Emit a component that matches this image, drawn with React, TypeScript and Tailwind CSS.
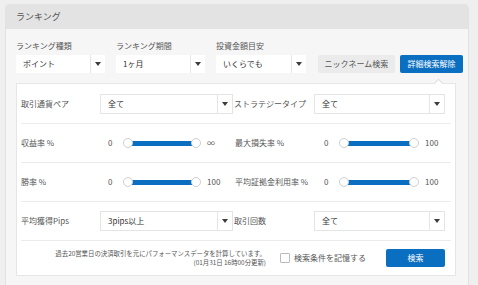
const FONT = "font-['Noto_Sans_CJK_JP','Noto_Sans',sans-serif]";

function Caret() {
  return (
    <svg width="6" height="4" viewBox="0 0 6 4" className="block">
      <path d="M0 0 L6 0 L3 4 Z" fill="#3c3c3c" />
    </svg>
  );
}

function Select({ value, width, bordered, arrowW }: { value: string; width: string; bordered?: boolean; arrowW: string }) {
  return (
    <div
      className={`${width} h-full bg-white flex items-stretch ${bordered ? "border border-[#e4e4e4]" : ""}`}
    >
      <div className="flex-1 flex items-center pl-[7px] text-[8px] text-[#333] leading-none">{value}</div>
      <div className={`${arrowW} border-l border-[#e6e6e6] flex items-center justify-center`}>
        <Caret />
      </div>
    </div>
  );
}

function Slider({ width, max }: { width: string; max: string }) {
  return (
    <div className="flex items-center">
      <span className="w-[15px] text-[8px] text-[#555] leading-none">0</span>
      <div className={`relative ${width} h-[10px]`}>
        <div className="absolute left-[5px] right-[5px] top-[3px] h-[4.5px] bg-[#0b6fc1]" />
        <div className="absolute left-0 top-0 w-[10px] h-[10px] rounded-full bg-white border border-[#cfcfcf]" />
        <div className="absolute right-0 top-0 w-[10px] h-[10px] rounded-full bg-white border border-[#cfcfcf]" />
      </div>
      <span className="ml-[6px] text-[8px] text-[#555] leading-none">{max}</span>
    </div>
  );
}

function Row({ children, last }: { children: React.ReactNode; last?: boolean }) {
  return (
    <div className={`h-[39px] mx-[4px] flex items-center ${last ? "" : "border-b border-[#ececec]"}`}>
      {children}
    </div>
  );
}

function Label({ text, w }: { text: string; w: string }) {
  return <div className={`${w} text-[8px] text-[#555] leading-none`}>{text}</div>;
}

export default function App() {
  return (
    <div className={`w-[478px] h-[285px] bg-[#efefef] pt-[4px] pl-[5px] overflow-hidden ${FONT}`}>
      <div className="w-[464px] h-[290px] rounded-t-[4px] bg-[#f6f6f6] border border-[#e2e2e2]">
        {/* Header */}
        <div className="h-[24px] bg-[#e3e3e3] rounded-t-[3px] pl-[10px] flex items-center text-[9px] text-[#555]">
          ランキング
        </div>

        <div className="pl-[10px]">
          {/* Top controls */}
          <div className="flex items-end pt-[11px]">
            <div className="w-[89px]">
              <div className="h-[11px] text-[8px] text-[#555] leading-[11px]">ランキング種類</div>
              <div className="h-[18px] mt-[4px]">
                <Select value="ポイント" width="w-[89px]" arrowW="w-[15px]" />
              </div>
            </div>
            <div className="w-[89px] ml-[11px]">
              <div className="h-[11px] text-[8px] text-[#555] leading-[11px]">ランキング期間</div>
              <div className="h-[18px] mt-[4px]">
                <Select value="1ヶ月" width="w-[89px]" arrowW="w-[15px]" />
              </div>
            </div>
            <div className="w-[90px] ml-[11px]">
              <div className="h-[11px] text-[8px] text-[#555] leading-[11px]">投資金額目安</div>
              <div className="h-[18px] mt-[4px]">
                <Select value="いくらでも" width="w-[90px]" arrowW="w-[15px]" />
              </div>
            </div>
            <button className="ml-[12px] w-[77px] h-[18px] bg-[#ebebeb] rounded-[2px] text-[8px] text-[#555] leading-none">
              ニックネーム検索
            </button>
            <button className="ml-[5px] w-[63px] h-[18px] bg-[#0b6fc1] rounded-[2px] text-[8px] text-white leading-none">
              詳細検索解除
            </button>
          </div>

          {/* Detail box */}
          <div className="relative mt-[10px] w-[440px] h-[193px] bg-white border border-[#e6e6e6] pt-[1px]">
            <div className="absolute -top-[4px] left-[418px] w-[7px] h-[7px] rotate-45 bg-white border-l border-t border-[#dedede]" />

            <Row>
              <Label text="取引通貨ペア" w="w-[79px]" />
              <div className="h-[20px]">
                <Select value="全て" width="w-[133px]" bordered arrowW="w-[15px]" />
              </div>
              <Label text="ストラテジータイプ" w="w-[81px] pl-[1px]" />
              <div className="h-[20px]">
                <Select value="全て" width="w-[131px]" bordered arrowW="w-[15px]" />
              </div>
            </Row>

            <Row>
              <Label text="収益率 %" w="w-[87px]" />
              <div className="w-[126px]">
                <Slider width="w-[78px]" max="∞" />
              </div>
              <Label text="最大損失率 %" w="w-[90px] pl-[1px]" />
              <Slider width="w-[80px]" max="100" />
            </Row>

            <Row>
              <Label text="勝率 %" w="w-[87px]" />
              <div className="w-[126px]">
                <Slider width="w-[78px]" max="100" />
              </div>
              <Label text="平均証拠金利用率 %" w="w-[90px] pl-[1px]" />
              <Slider width="w-[80px]" max="100" />
            </Row>

            <Row>
              <Label text="平均獲得Pips" w="w-[79px]" />
              <div className="h-[20px]">
                <Select value="3pips以上" width="w-[133px]" bordered arrowW="w-[15px]" />
              </div>
              <Label text="取引回数" w="w-[81px] pl-[1px]" />
              <div className="h-[20px]">
                <Select value="全て" width="w-[131px]" bordered arrowW="w-[15px]" />
              </div>
            </Row>

            {/* Footer */}
            <div className="h-[34px] flex items-center pr-[10px]">
              <div className="w-[249px] text-right text-[6.4px] leading-[9px] text-[#555]">
                <div>過去20営業日の決済取引を元にパフォーマンスデータを計算しています。</div>
                <div>(01月31日 16時00分更新)</div>
              </div>
              <div className="ml-[14px] w-[10px] h-[10px] border border-[#bbb] bg-white rounded-[1px]" />
              <span className="ml-[4px] text-[8px] text-[#555] leading-none">検索条件を記憶する</span>
              <div className="flex-1" />
              <button className="w-[59px] h-[18px] bg-[#0b6fc1] rounded-[2px] text-[8px] text-white leading-none">
                検索
              </button>
            </div>
          </div>
        </div>
      </div>
    </div>
  );
}
